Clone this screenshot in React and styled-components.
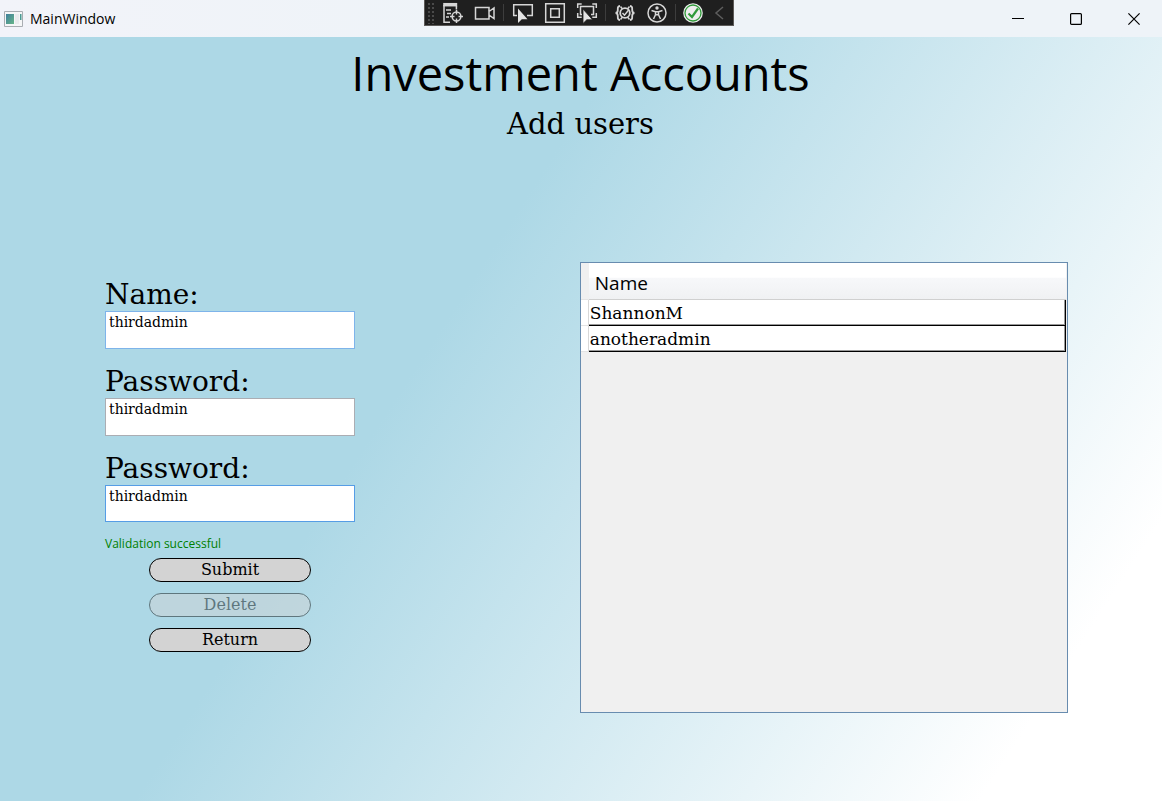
import React from 'react';
import styled, { createGlobalStyle } from 'styled-components';

const sans = '"Open Sans", "Noto Sans", sans-serif';
const slab = '"DejaVu Serif", serif';

const GlobalStyle = createGlobalStyle`
  *, *::before, *::after { box-sizing: border-box; }
  body { margin: 0; background: #fff; color: #000; font-family: ${sans}; }
`;

const Window = styled.div`
  min-height: 100vh;
  display: flex;
  flex-direction: column;
`;

const TitleBar = styled.header`
  position: relative;
  height: 37px;
  display: flex;
  align-items: center;
  justify-content: space-between;
  background: linear-gradient(90deg, #f2f3f9, #eef3f8 40%, #eef3f8);
`;

const AppTitle = styled.div`
  display: flex;
  align-items: center;
  gap: 7px;
  padding-left: 4px;
  font-size: 14px;
  line-height: 20px;
`;

const DebugBar = styled.div`
  position: absolute;
  top: 0;
  left: 50%;
  width: 310px;
  height: 26px;
  margin-left: -157px;
  display: flex;
  align-items: center;
  background: #1f1f1f;
  border: 1px solid #5c5a58;
  border-top: 0;
`;

const ToolButton = styled.button`
  flex: none;
  width: ${(p) => p.$width || 32}px;
  height: 25px;
  padding: 0;
  border: 0;
  background: none;
  display: flex;
  align-items: center;
  justify-content: center;
`;

const Divider = styled.span`
  width: 1px;
  height: 17px;
  margin: 0 3px 0 2px;
  background: #3d3d3d;
`;

const Grip = styled.span`
  width: 8px;
  height: 22px;
  margin: 0 2px;
  background-image: radial-gradient(circle, #4a4a4a 1px, transparent 1px);
  background-size: 4px 4px;
`;

const WindowControls = styled.div`
  display: flex;
  gap: 2px;
`;

const WindowButton = styled.button`
  width: 56px;
  height: 36px;
  padding: 0;
  border: 0;
  background: none;
  display: flex;
  align-items: center;
  justify-content: center;
`;

const Page = styled.main`
  flex: 1;
  padding: 6px 94px 88px 105px;
  background: linear-gradient(123deg, #add8e6 38%, #fff 89%);
`;

const Heading = styled.h1`
  margin: 0 0 0 -12px;
  font-size: 47px;
  line-height: 60px;
  font-weight: 400;
  text-align: center;
`;

const SubHeading = styled.h2`
  margin: 0 0 0 -12px;
  font-family: ${slab};
  font-size: 29px;
  line-height: 42px;
  font-weight: 400;
  text-align: center;
`;

const Columns = styled.div`
  display: flex;
  justify-content: space-between;
  align-items: flex-start;
  margin-top: 117px;
`;

const Form = styled.form`
  width: 250px;
  padding-top: 14px;
  display: flex;
  flex-direction: column;
`;

const Field = styled.div`
  display: flex;
  flex-direction: column;
  margin-bottom: 14px;
`;

const Label = styled.label`
  padding-top: 2px;
  font-family: ${slab};
  font-size: 28px;
  line-height: 33px;
`;

const TextBox = styled.input`
  height: ${(p) => p.$height}px;
  padding: 0 3px 16px;
  border: 1px solid ${(p) => p.$border};
  border-radius: 0;
  background: #fff;
  color: #000;
  font-family: ${slab};
  font-size: 14px;
  line-height: 20px;
  outline: none;
`;

const Status = styled.p`
  margin: 0;
  color: #008000;
  font-size: 12px;
  line-height: 16px;
`;

const Actions = styled.div`
  display: flex;
  flex-direction: column;
  align-items: center;
  gap: 11px;
  margin-top: 6px;
`;

const ActionButton = styled.button`
  width: 162px;
  height: 24px;
  padding: 0;
  border: 1px solid #000;
  border-radius: 12px;
  background: #d3d3d3;
  color: #000;
  font-family: ${slab};
  font-size: 16px;
  line-height: 22px;
  &:disabled { opacity: 0.45; }
`;

const GridPanel = styled.section`
  width: 50.7%;
  min-height: 451px;
  padding-right: 1px;
  border: 1px solid #688caf;
  background: #f0f0f0;
`;

const UserTable = styled.table`
  width: 100%;
  border-collapse: separate;
  border-spacing: 0;
`;

const RowHeader = styled.td`
  width: 8px;
  padding: 0;
  background: ${(p) => (p.$top ? '#f0f0f0' : '#fff')};
  border-right: 1px solid ${(p) => (p.$top ? '#f0f0f0' : '#d8d8d8')};
  border-bottom: 1px solid #e4e4e4;
`;

const ColumnHeader = styled.th`
  height: 37px;
  padding: 4px 6px 0;
  border-bottom: 1px solid #d0d0d0;
  background: linear-gradient(#fff 40%, #f7f8fa 41%, #f0f1f3);
  font-size: 19px;
  line-height: 28px;
  font-weight: 400;
  text-align: left;
`;

const Cell = styled.td`
  height: 26px;
  padding: 0 1px;
  border-right: 1px solid #000;
  border-bottom: 1px solid #000;
  box-shadow: inset -1px -1px #999;
  background: #fff;
  font-family: ${slab};
  font-size: 17px;
  line-height: 24px;
`;

const Icon = ({ children, size = 22 }) => (
  <svg width={size} height={size} viewBox="0 0 22 22" fill="none" stroke="#d6d6d6" strokeWidth="1.5" aria-hidden="true">
    {children}
  </svg>
);

const cursor = 'M0 0v14.500l3.800-3.700h5.700z';

const tools = [
  { name: 'Live Visual Tree', width: 32, icon: (
    <>
      <path d="M1.200 2.700h14" strokeWidth="3.500" />
      <path d="M2 3v17.200h6M14.400 4v3.500M4 8h5M5 11.500h4M4 15h3" />
      <circle cx="14.500" cy="14.500" r="4.400" />
      <path d="M14.500 8v4.500M14.500 16.500V21M8 14.500h4.500M16.500 14.500H21" />
    </>
  ) },
  { name: 'Hot Reload recording', width: 32, divider: true, icon: (
    <path d="M1.500 5.500h13.500v11.500H1.500zM15 9.500l5-3.500v10.500l-5-3.500" />
  ) },
  { name: 'Select element', width: 32, icon: (
    <>
      <path d="M5 13.500H1.700V2.700h18.600v10.800H15" />
      <path d={cursor} transform="translate(6 6.500)" fill="#e4e4e4" stroke="none" />
    </>
  ) },
  { name: 'Display layout adorners', width: 32, icon: (
    <path d="M1.700 1.700h18.600v18.600H1.700zM6.700 6.700h8.600v8.600H6.700z" />
  ) },
  { name: 'Track focused element', width: 32, divider: true, icon: (
    <>
      <path d="M1.700 6V2h4M16.300 2h4v4M1.700 11v4.200h4M16.300 15.200h4V11M6 12.500H4.500V4.500h13v8H15" />
      <path d={cursor} transform="translate(7 7)" fill="#e4e4e4" stroke="#1f1f1f" strokeWidth=".8" />
    </>
  ) },
  { name: 'Binding failures', width: 32, icon: (
    <>
      <path d="M6 4C3.500 4 3.800 6 3.800 8S3 11 1.500 11c1.500 0 2.300 1 2.300 3s-.3 4 2.200 4M16 4c2.500 0 2.200 2 2.200 4s.8 3 2.300 3c-1.500 0-2.300 1-2.300 3s.3 4-2.200 4" strokeWidth="1.800" />
      <circle cx="11" cy="11" r="4.800" strokeWidth="1.800" />
      <path d="M8.500 11l2 2.200L15 7.500M6.500 4.500l2 2.500M15.500 17.500l-2-2.500M6.500 17.500l2-2.500M15.500 4.500l-2 2.500" />
    </>
  ) },
  { name: 'Scan for accessibility issues', width: 32, divider: true, icon: (
    <>
      <circle cx="11" cy="11" r="9" />
      <circle cx="11" cy="6" r="1.700" fill="#d6d6d6" stroke="none" />
      <path d="M5.500 8.500l4 1.200h3l4-1.200M9.500 9.700v3L7.500 17M12.500 9.700v3l2 4.300M9.500 12.700h3" />
    </>
  ) },
  { name: 'Hot Reload status', width: 28, icon: (
    <>
      <circle cx="11" cy="11" r="9.800" fill="#eee" stroke="none" />
      <circle cx="11" cy="11" r="8" stroke="#319b3b" strokeWidth="1.300" />
      <path d="M6.500 11.500l3.500 3.500 6-8.500" stroke="#319b3b" strokeWidth="2.200" />
    </>
  ) },
  { name: 'Collapse toolbar', width: 26, icon: <path d="M14 5l-7 6 7 6" stroke="#5e5e5e" /> },
];

const fields = [
  { id: 'name', label: 'Name:', border: '#7eb4ea', height: 38 },
  { id: 'password', label: 'Password:', border: '#abadb3', height: 38 },
  { id: 'confirm', label: 'Password:', border: '#569de5', height: 37 },
];

const users = ['ShannonM', 'anotheradmin'];

export default function App() {
  return (
    <>
      <GlobalStyle />
      <Window>
        <TitleBar>
          <AppTitle>
            <svg width="19" height="16" viewBox="0 0 19 16" aria-hidden="true">
              <defs>
                <linearGradient id="pane" x1="0" y1="0" x2="1" y2="1">
                  <stop offset="0" stopColor="#3f7f9c" />
                  <stop offset="1" stopColor="#67b588" />
                </linearGradient>
              </defs>
              <path d="M.5.5h18v15H.5z" fill="#f5f6f7" stroke="#a9adb2" />
              <path d="M2 3h8v10H2z" fill="url(#pane)" />
              <path d="M11 3h4v10h-4z" fill="#e9ebed" />
              <path d="M16 3h1.500v6H16z" fill="#4a9a93" />
            </svg>
            <span>MainWindow</span>
          </AppTitle>
          <DebugBar>
            <Grip />
            {tools.map((tool) => (
              <React.Fragment key={tool.name}>
                <ToolButton type="button" aria-label={tool.name} $width={tool.width}>
                  <Icon>{tool.icon}</Icon>
                </ToolButton>
                {tool.divider && <Divider />}
              </React.Fragment>
            ))}
          </DebugBar>
          <WindowControls>
            <WindowButton type="button" aria-label="Minimize">
              <svg width="12" height="12" aria-hidden="true"><path d="M0 5.500h12" stroke="#000" /></svg>
            </WindowButton>
            <WindowButton type="button" aria-label="Maximize">
              <svg width="12" height="12" aria-hidden="true"><rect x=".6" y=".6" width="10.800" height="10.800" rx="1" fill="none" stroke="#000" strokeWidth="1.200" /></svg>
            </WindowButton>
            <WindowButton type="button" aria-label="Close">
              <svg width="12" height="12" aria-hidden="true"><path d="M.4.4l11.200 11.200M11.600.4L.4 11.600" stroke="#000" strokeWidth="1.200" /></svg>
            </WindowButton>
          </WindowControls>
        </TitleBar>
        <Page>
          <Heading>Investment Accounts</Heading>
          <SubHeading>Add users</SubHeading>
          <Columns>
            <Form onSubmit={(e) => e.preventDefault()}>
              {fields.map((f) => (
                <Field key={f.id}>
                  <Label htmlFor={f.id}>{f.label}</Label>
                  <TextBox id={f.id} type="text" defaultValue="thirdadmin" $border={f.border} $height={f.height} />
                </Field>
              ))}
              <Status>Validation successful</Status>
              <Actions>
                <ActionButton type="submit">Submit</ActionButton>
                <ActionButton type="button" disabled>Delete</ActionButton>
                <ActionButton type="button">Return</ActionButton>
              </Actions>
            </Form>
            <GridPanel>
              <UserTable>
                <thead>
                  <tr>
                    <RowHeader $top />
                    <ColumnHeader scope="col">Name</ColumnHeader>
                  </tr>
                </thead>
                <tbody>
                  {users.map((user) => (
                    <tr key={user}>
                      <RowHeader />
                      <Cell>{user}</Cell>
                    </tr>
                  ))}
                </tbody>
              </UserTable>
            </GridPanel>
          </Columns>
        </Page>
      </Window>
    </>
  );
}
